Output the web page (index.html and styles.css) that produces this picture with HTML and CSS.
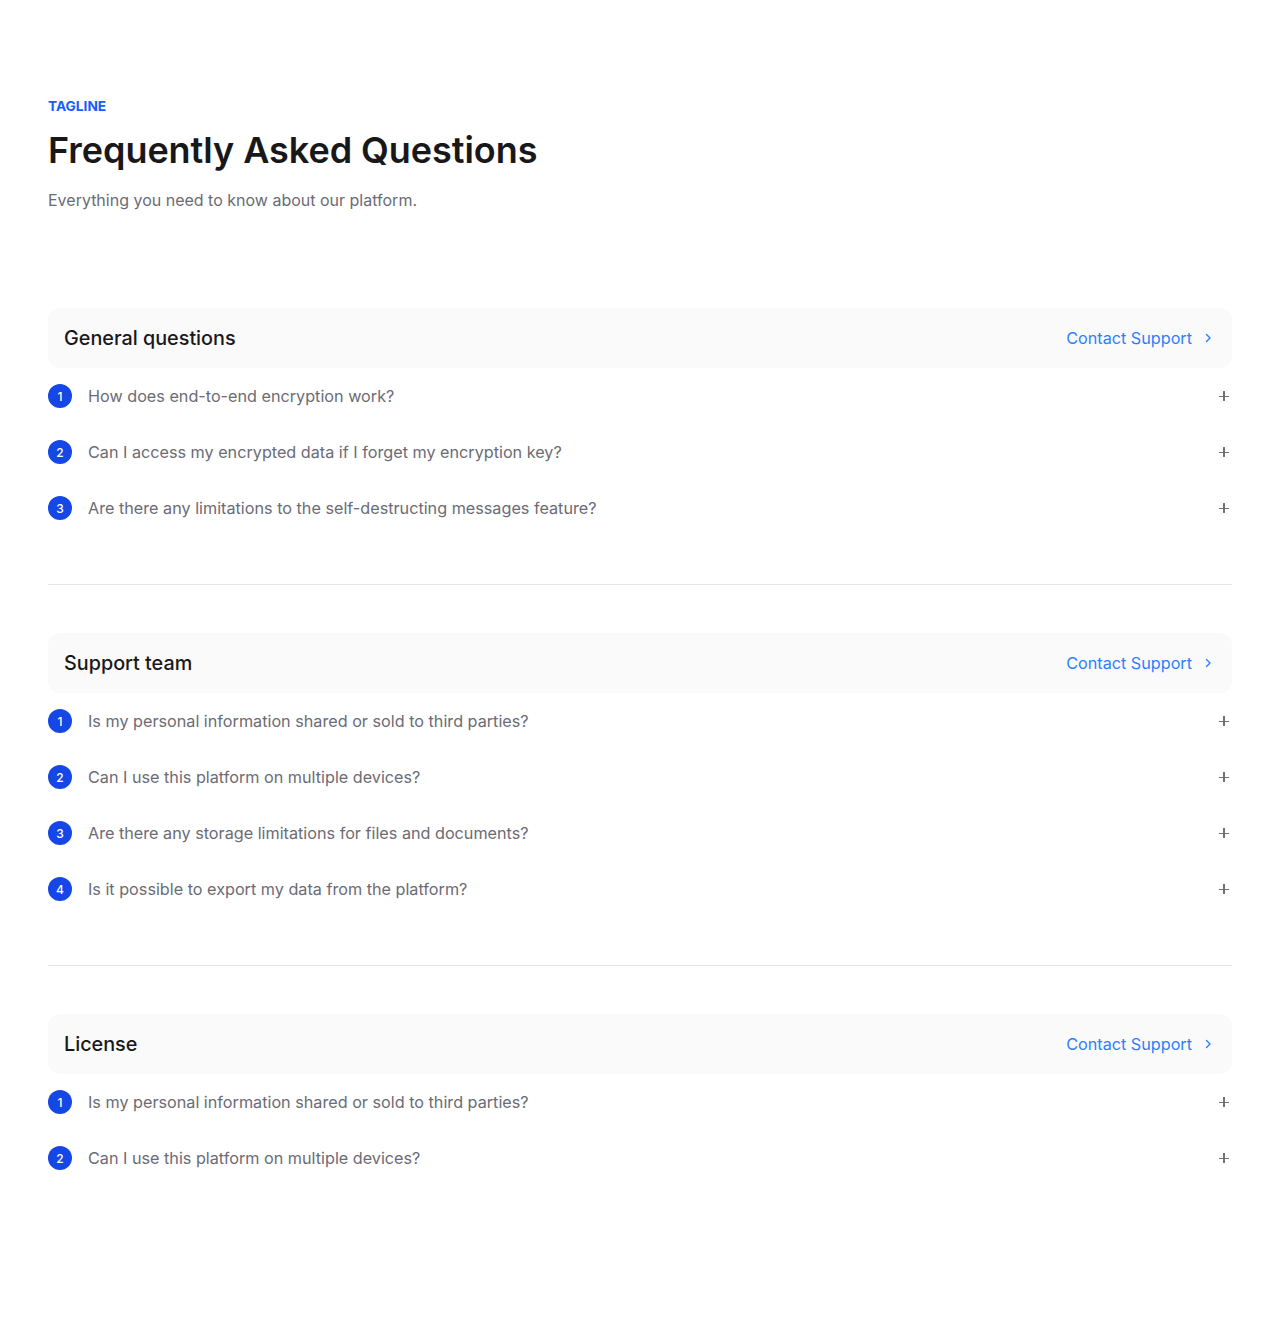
FILE: index.html
```html
<!DOCTYPE html>
<html lang="en">
<head>
<meta charset="utf-8">
<title>FAQ</title>
<link rel="stylesheet" href="styles.css">
</head>
<body>
<main class="page">
  <header class="intro">
    <p class="tagline">TAGLINE</p>
    <h1 class="title">Frequently Asked Questions</h1>
    <p class="subtitle">Everything you need to know about our platform.</p>
  </header>

  <section class="group">
    <div class="group-head">
      <h2 class="group-title">General questions</h2>
      <a class="contact" href="#">Contact Support
        <svg class="chev" width="16" height="16" viewBox="0 0 16 16" fill="none"><path d="M6.5 4.5L10 8l-3.5 3.5" stroke="currentColor" stroke-width="1.4" stroke-linecap="round" stroke-linejoin="round"/></svg>
      </a>
    </div>
    <ul class="list">
      <li class="item"><span class="num">1</span><span class="q">How does end-to-end encryption work?</span><span class="plus"></span></li>
      <li class="item"><span class="num">2</span><span class="q">Can I access my encrypted data if I forget my encryption key?</span><span class="plus"></span></li>
      <li class="item"><span class="num">3</span><span class="q">Are there any limitations to the self-destructing messages feature?</span><span class="plus"></span></li>
    </ul>
  </section>

  <section class="group">
    <div class="group-head">
      <h2 class="group-title">Support team</h2>
      <a class="contact" href="#">Contact Support
        <svg class="chev" width="16" height="16" viewBox="0 0 16 16" fill="none"><path d="M6.5 4.5L10 8l-3.5 3.5" stroke="currentColor" stroke-width="1.4" stroke-linecap="round" stroke-linejoin="round"/></svg>
      </a>
    </div>
    <ul class="list">
      <li class="item"><span class="num">1</span><span class="q">Is my personal information shared or sold to third parties?</span><span class="plus"></span></li>
      <li class="item"><span class="num">2</span><span class="q">Can I use this platform on multiple devices?</span><span class="plus"></span></li>
      <li class="item"><span class="num">3</span><span class="q">Are there any storage limitations for files and documents?</span><span class="plus"></span></li>
      <li class="item"><span class="num">4</span><span class="q">Is it possible to export my data from the platform?</span><span class="plus"></span></li>
    </ul>
  </section>

  <section class="group last">
    <div class="group-head">
      <h2 class="group-title">License</h2>
      <a class="contact" href="#">Contact Support
        <svg class="chev" width="16" height="16" viewBox="0 0 16 16" fill="none"><path d="M6.5 4.5L10 8l-3.5 3.5" stroke="currentColor" stroke-width="1.4" stroke-linecap="round" stroke-linejoin="round"/></svg>
      </a>
    </div>
    <ul class="list">
      <li class="item"><span class="num">1</span><span class="q">Is my personal information shared or sold to third parties?</span><span class="plus"></span></li>
      <li class="item"><span class="num">2</span><span class="q">Can I use this platform on multiple devices?</span><span class="plus"></span></li>
    </ul>
  </section>
</main>
</body>
</html>
```

FILE: styles.css
```css
* { box-sizing: border-box; }
html, body { margin: 0; padding: 0; background: #fff; }
body {
  font-family: "Inter", "Liberation Sans", sans-serif;
  color: #18181b;
}
.page {
  padding: 96px 48px 96px;
  display: flex;
  flex-direction: column;
}
.intro { display: flex; flex-direction: column; }
.tagline {
  margin: 0 0 12px;
  font-size: 13.7px;
  line-height: 20px;
  font-weight: 700;
  color: #155dfc;
}
.title {
  margin: 0;
  font-size: 36px;
  line-height: 44px;
  font-weight: 600;
  letter-spacing: -0.05px;
  color: #18181b;
}
.subtitle {
  margin: 16px 0 0;
  font-size: 16px;
  line-height: 24px;
  color: #6b6b75;
}
.group {
  margin-top: 96px;
  padding-bottom: 48px;
  border-bottom: 1px solid #e4e4e7;
}
.group + .group { margin-top: 48px; }
.group.last { border-bottom: none; }
.group-head {
  height: 60px;
  background: #fafafa;
  border-radius: 12px;
  display: flex;
  align-items: center;
  justify-content: space-between;
  padding: 0 16px;
}
.group-title {
  margin: 0;
  font-size: 19.8px;
  line-height: 28px;
  font-weight: 500;
  color: #18181b;
}
.contact {
  display: flex;
  align-items: center;
  gap: 8px;
  font-size: 16.2px;
  line-height: 24px;
  color: #2b7fff;
  text-decoration: none;
}
.chev { display: block; }
.list { list-style: none; margin: 0; padding: 0; }
.item {
  height: 56px;
  display: flex;
  align-items: center;
  gap: 16px;
}
.num {
  width: 24px;
  height: 24px;
  border-radius: 50%;
  background: #1447e6;
  color: #fff;
  font-size: 12px;
  font-weight: 500;
  display: flex;
  align-items: center;
  justify-content: center;
  flex: none;
}
.q {
  flex: 1;
  font-size: 16.2px;
  line-height: 24px;
  color: #6b6b75;
}
.plus {
  position: relative;
  width: 16px;
  height: 16px;
  flex: none;
}
.plus::before, .plus::after {
  content: "";
  position: absolute;
  background: #71717a;
}
.plus::before { left: 3px; top: 7.5px; width: 10px; height: 1.5px; }
.plus::after { left: 7.25px; top: 3px; width: 1.5px; height: 10px; }
```
